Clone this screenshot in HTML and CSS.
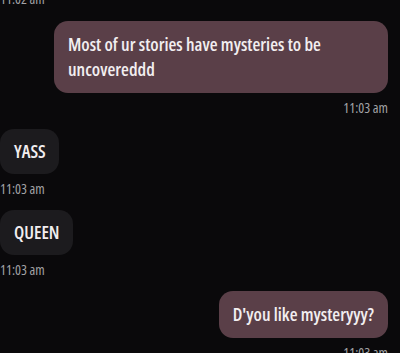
FILE: index.html
```html
<!DOCTYPE html>
<html>
<head>
<meta charset="utf-8">
<link rel="stylesheet" href="styles.css">
</head>
<body>
<div class="chat">
  <div class="ts ts-left ts-first">11:02 am</div>
  <div class="bubble sent bubble-first">Most of ur stories have mysteries to be uncovereddd</div>
  <div class="ts ts-right">11:03 am</div>
  <div class="bubble recv">YASS</div>
  <div class="ts ts-left">11:03 am</div>
  <div class="bubble recv">QUEEN</div>
  <div class="ts ts-left">11:03 am</div>
  <div class="bubble sent">D'you like mysteryyy?</div>
  <div class="ts ts-right">11:03 am</div>
</div>
</body>
</html>
```
FILE: styles.css
```css
html, body {
  margin: 0;
  padding: 0;
  background: #0a090b;
  overflow: hidden;
}
.chat {
  display: flex;
  flex-direction: column;
  padding: 0 12px 0 0;
  margin-top: -9px;
  font-family: "Open Sans", "Noto Sans", sans-serif;
  font-stretch: condensed;
}
.ts {
  font-size: 14px;
  line-height: 16px;
  font-weight: 500;
  color: #a3a3a6;
  margin-top: 7px;
}
.ts-first { margin-top: 0; }
.ts-left { align-self: flex-start; }
.ts-right { align-self: flex-end; }
.bubble {
  font-size: 18px;
  font-weight: 600;
  line-height: 25px;
  color: #f2eef0;
  border-radius: 14px;
  margin-top: 13px;
}
.bubble-first { margin-top: 14px; }
.sent {
  align-self: flex-end;
  background: #5a3f48;
  padding: 11px 14px;
  max-width: 306px;
}
.recv {
  align-self: flex-start;
  background: #1c1b1e;
  padding: 10px 13px 10px 14px;
}
```
